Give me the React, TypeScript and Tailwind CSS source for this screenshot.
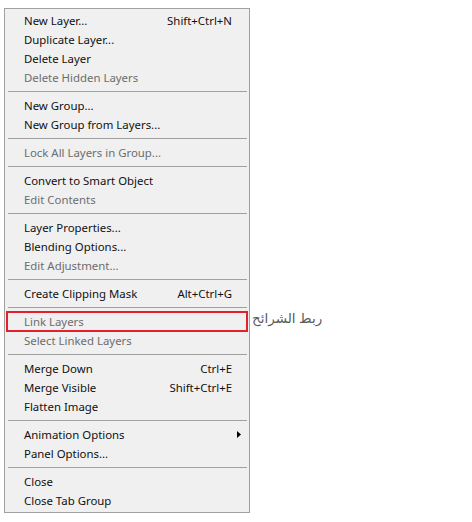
import React from "react";

type Item =
  | { kind: "sep" }
  | { kind: "item"; label: string; shortcut?: string; disabled?: boolean; submenu?: boolean; marked?: boolean };

const items: Item[] = [
  { kind: "item", label: "New Layer...", shortcut: "Shift+Ctrl+N" },
  { kind: "item", label: "Duplicate Layer..." },
  { kind: "item", label: "Delete Layer" },
  { kind: "item", label: "Delete Hidden Layers", disabled: true },
  { kind: "sep" },
  { kind: "item", label: "New Group..." },
  { kind: "item", label: "New Group from Layers..." },
  { kind: "sep" },
  { kind: "item", label: "Lock All Layers in Group...", disabled: true },
  { kind: "sep" },
  { kind: "item", label: "Convert to Smart Object" },
  { kind: "item", label: "Edit Contents", disabled: true },
  { kind: "sep" },
  { kind: "item", label: "Layer Properties..." },
  { kind: "item", label: "Blending Options..." },
  { kind: "item", label: "Edit Adjustment...", disabled: true },
  { kind: "sep" },
  { kind: "item", label: "Create Clipping Mask", shortcut: "Alt+Ctrl+G" },
  { kind: "sep" },
  { kind: "item", label: "Link Layers", disabled: true, marked: true },
  { kind: "item", label: "Select Linked Layers", disabled: true },
  { kind: "sep" },
  { kind: "item", label: "Merge Down", shortcut: "Ctrl+E" },
  { kind: "item", label: "Merge Visible", shortcut: "Shift+Ctrl+E" },
  { kind: "item", label: "Flatten Image" },
  { kind: "sep" },
  { kind: "item", label: "Animation Options", submenu: true },
  { kind: "item", label: "Panel Options..." },
  { kind: "sep" },
  { kind: "item", label: "Close" },
  { kind: "item", label: "Close Tab Group" },
];

export default function App() {
  return (
    <div
      className="w-[472px] h-[522px] bg-white pt-[8px] pl-[4px] flex items-start"
      style={{ fontFamily: '"Noto Sans", "Open Sans", sans-serif' }}
    >
      <div className="w-[246px] h-[505px] bg-[#f0f0f0] border border-[#a0a0a0] py-[2px] flex flex-col shrink-0">
        {items.map((it, i) =>
          it.kind === "sep" ? (
            <div key={i} className="h-[9px] flex items-center pl-[3px] pr-[2px]">
              <div className="w-full h-[1px] bg-[#a0a0a0]" />
            </div>
          ) : (
            <div key={i} className="relative h-[19px] flex items-center pl-[19px] pr-[17px] text-[11.4px] leading-none">
              <span className={it.disabled ? "text-[#6d6d6d]" : "text-[#111]"}>{it.label}</span>
              {it.shortcut && <span className="ml-auto text-[#111]">{it.shortcut}</span>}
              {it.submenu && (
                <svg className="ml-auto mr-[-9px]" width="4" height="7" viewBox="0 0 4 7">
                  <path d="M0 0 L4 3.5 L0 7 Z" fill="#000" />
                </svg>
              )}
              {it.marked && (
                <>
                  <div className="absolute left-[1px] right-[1px] top-[-1px] bottom-[-1px] border-2 border-[#e3202b]" />
                  <span
                    dir="rtl"
                    className="absolute left-[247px] top-[0px] whitespace-nowrap text-[13.5px] text-[#5a5a5a]"
                    style={{ fontFamily: '"Noto Sans", "DejaVu Sans", sans-serif' }}
                  >
                    ربط الشرائح
                  </span>
                </>
              )}
            </div>
          )
        )}
      </div>
    </div>
  );
}
